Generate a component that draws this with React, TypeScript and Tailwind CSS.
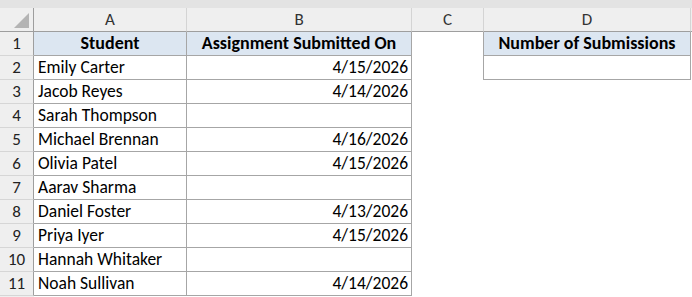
const rows: [string, string][] = [
  ['Emily Carter', '4/15/2026'],
  ['Jacob Reyes', '4/14/2026'],
  ['Sarah Thompson', ''],
  ['Michael Brennan', '4/16/2026'],
  ['Olivia Patel', '4/15/2026'],
  ['Aarav Sharma', ''],
  ['Daniel Foster', '4/13/2026'],
  ['Priya Iyer', '4/15/2026'],
  ['Hannah Whitaker', ''],
  ['Noah Sullivan', '4/14/2026'],
];

const font = { fontFamily: 'Carlito, Lato, "Open Sans", sans-serif' };

function RowHead({ n }: { n: number }) {
  return (
    <div className="flex h-6 items-center justify-center border-r border-b border-r-[#9e9e9e] border-b-[#d6d6d6] bg-[#efefef] text-[17px] text-[#222]">
      {n}
    </div>
  );
}

export default function App() {
  return (
    <div
      className="h-[297px] w-[692px] overflow-hidden bg-white text-black"
      style={font}
    >
      <div className="h-2 bg-[#e3e3e3]" />
      <div className="grid grid-cols-[34px_153px_225px_72px_207px_1fr]">
        {/* column headers */}
        <div className="relative h-6 border-r border-b border-r-[#9e9e9e] border-b-[#9e9e9e] bg-[#efefef]">
          <div className="absolute top-[5px] left-[14px] h-0 w-0 [border-right:15px_solid_#b4b4b4] [border-top:15px_solid_transparent]" />
        </div>
        {['A', 'B', 'C', 'D'].map((c) => (
          <div
            key={c}
            className="flex h-6 items-center justify-center border-r border-b border-r-[#d4d4d4] border-b-[#9e9e9e] bg-[#efefef] text-[17px] text-[#333]"
          >
            {c}
          </div>
        ))}
        <div className="h-6 border-b border-b-[#9e9e9e] bg-[#efefef]" />

        {/* row 1 */}
        <RowHead n={1} />
        <div className="flex h-6 items-center justify-center border-r border-b border-[#a6a6a6] bg-[#dce6f1] text-[18px] font-bold">
          Student
        </div>
        <div className="flex h-6 items-center justify-center border-r border-b border-[#a6a6a6] bg-[#dce6f1] text-[18px] font-bold">
          Assignment Submitted On
        </div>
        <div className="h-6 border-r border-[#a6a6a6]" />
        <div className="flex h-6 items-center justify-center border-r border-b border-[#a6a6a6] bg-[#dce6f1] text-[18px] font-bold">
          Number of Submissions
        </div>
        <div />

        {rows.map(([name, date], i) => (
          <div key={name} className="contents">
            <RowHead n={i + 2} />
            <div className="flex h-6 items-center border-r border-b border-[#a6a6a6] pl-1 text-[17.5px]">
              {name}
            </div>
            <div className="flex h-6 items-center justify-end border-r border-b border-[#a6a6a6] pr-[3px] text-[17.5px]">
              {date}
            </div>
            <div className={i === 0 ? 'h-6 border-r border-[#a6a6a6]' : 'h-6'} />
            <div
              className={
                i === 0 ? 'h-6 border-r border-b border-[#a6a6a6]' : 'h-6'
              }
            />
            <div />
          </div>
        ))}
        <div className="h-2 bg-[#efefef]" />
      </div>
    </div>
  );
}
